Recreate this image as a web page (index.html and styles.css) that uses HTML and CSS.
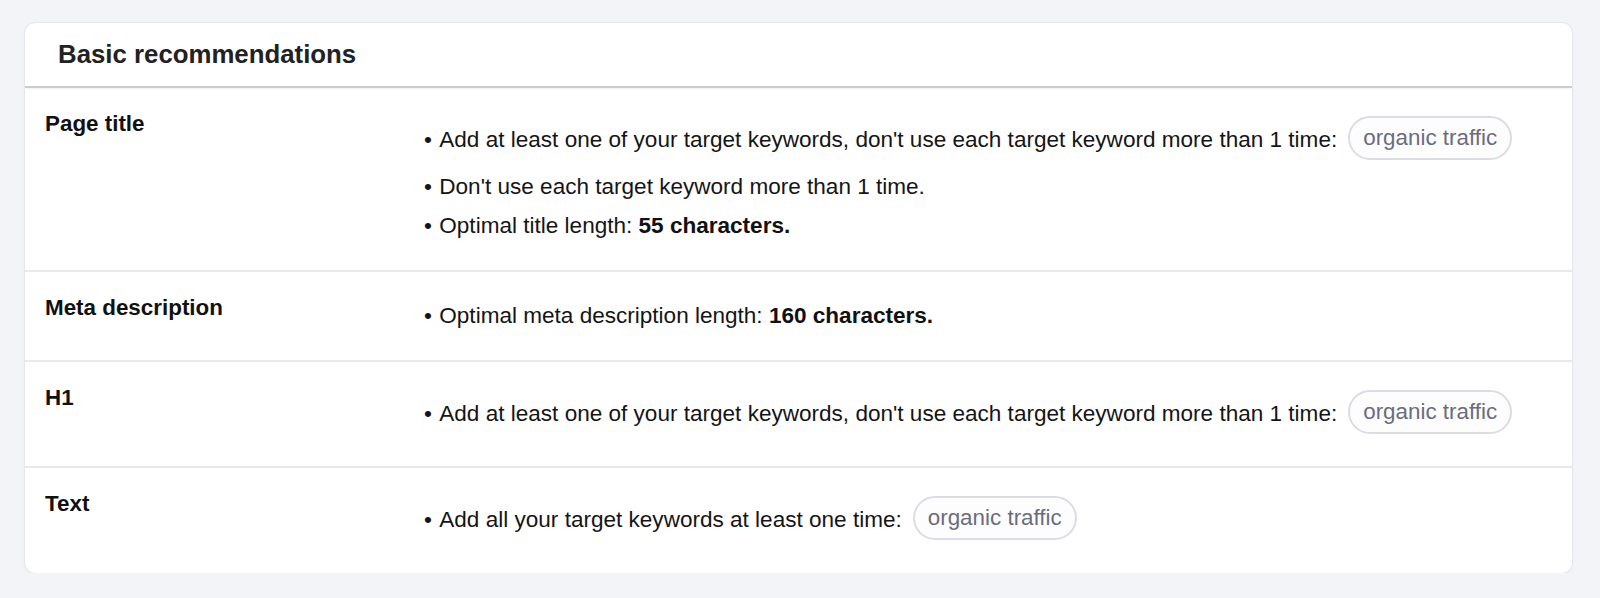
FILE: index.html
```html
<!DOCTYPE html>
<html lang="en">
<head>
<meta charset="utf-8">
<title>Basic recommendations</title>
<link rel="stylesheet" href="styles.css">
</head>
<body>
<section class="card">
  <header class="card-header">
    <h2 class="card-title">Basic recommendations</h2>
  </header>
  <div class="row">
    <div class="label">Page title</div>
    <ul class="recs">
      <li class="rec has-tag">Add at least one of your target keywords, don't use each target keyword more than 1 time: <span class="tag">organic traffic</span></li>
      <li class="rec">Don't use each target keyword more than 1 time.</li>
      <li class="rec">Optimal title length:&nbsp;<b>55 characters.</b></li>
    </ul>
  </div>
  <div class="row">
    <div class="label">Meta description</div>
    <ul class="recs">
      <li class="rec">Optimal meta description length:&nbsp;<b>160 characters.</b></li>
    </ul>
  </div>
  <div class="row">
    <div class="label">H1</div>
    <ul class="recs">
      <li class="rec has-tag">Add at least one of your target keywords, don't use each target keyword more than 1 time: <span class="tag">organic traffic</span></li>
    </ul>
  </div>
  <div class="row">
    <div class="label">Text</div>
    <ul class="recs">
      <li class="rec has-tag">Add all your target keywords at least one time: <span class="tag">organic traffic</span></li>
    </ul>
  </div>
</section>
</body>
</html>
```
FILE: styles.css
```css
* { box-sizing: border-box; }

html, body {
  margin: 0;
  background: #f3f4f8;
}

body {
  padding: 23px 28px 0 25px;
  font-family: "Liberation Sans", Arial, sans-serif;
  color: #111;
}

.card {
  background: #fff;
  border-radius: 10px;
  box-shadow: 0 0 0 1px #e6e7ec, 0 1px 3px rgba(0, 0, 0, 0.08);
  overflow: hidden;
}

.card-header {
  height: 65px;
  display: flex;
  align-items: center;
  padding: 0 33px;
  border-bottom: 2px solid #cbccd2;
  box-shadow: 0 1px 2px rgba(0, 0, 0, 0.06);
}

.card-title {
  margin: 0;
  font-size: 25.8px;
  font-weight: 700;
  color: #222;
}

.row {
  display: flex;
  padding: 23px 20px 31.2px 20px;
  border-bottom: 2px solid #e8e8ee;
}

.row:last-child {
  border-bottom: none;
}

.label {
  width: 379px;
  flex: none;
  font-size: 22.4px;
  font-weight: 700;
  color: #111;
}

.recs {
  list-style: none;
  margin: 6.2px 0 0;
  padding: 0;
  font-size: 22.55px;
  color: #151515;
}

.rec {
  display: flex;
  align-items: center;
  line-height: 27.3px;
  margin-bottom: 11.7px;
}

.rec:last-child {
  margin-bottom: 0;
}

.rec::before {
  content: "\2022";
  width: 15.3px;
  flex: none;
}

.rec b {
  font-weight: 700;
  color: #111;
}

.tag {
  display: inline-flex;
  align-items: center;
  height: 44px;
  margin: -1.5px 0 1.5px 11px;
  padding: 0 13px;
  border: 2px solid #dcdde3;
  border-radius: 22px;
  color: #6b6d7c;
  background: #fdfdfe;
  font-size: 22.4px;
  line-height: 28px;
  white-space: nowrap;
}
```
